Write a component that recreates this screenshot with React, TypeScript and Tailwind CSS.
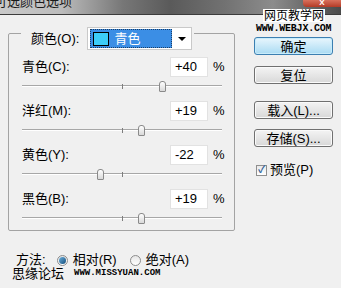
import type { ReactNode } from 'react';

interface ChannelRow {
  label: string;
  value: number;
}

const rows: ChannelRow[] = [
  { label: '青色(C):', value: 40 },
  { label: '洋红(M):', value: 19 },
  { label: '黄色(Y):', value: -22 },
  { label: '黑色(B):', value: 19 },
];

const formatValue = (value: number) => (value > 0 ? `+${value}` : `${value}`);

function Slider({ value }: { value: number }) {
  return (
    <div className="relative h-[18px]">
      <div className="absolute left-0 right-0 top-[8px] h-px bg-[#a7a7a7]" />
      <div className="absolute left-0 right-0 top-[9px] h-px bg-white" />
      <div className="absolute left-[100px] top-[7px] h-[5px] w-px bg-[#7d7d7d]" />
      <div
        className="absolute top-[4px] h-[11px] w-[7px] rounded-t-[3px] rounded-b-[1px] border border-[#8a8a8a] bg-gradient-to-b from-white to-[#d9d9d9]"
        style={{ left: 100 + value - 3 }}
      />
    </div>
  );
}

function Button({ children, primary }: { children: ReactNode; primary?: boolean }) {
  return (
    <div
      className={
        primary
          ? 'flex h-[18px] w-[79px] items-center justify-center rounded-[3px] border border-[#3c7fb1] bg-gradient-to-b from-[#e8f6fd] to-[#a9dbf3] shadow-[inset_0_0_0_1px_#c8ecfb] text-[13px] leading-none text-black'
          : 'flex h-[18px] w-[79px] items-center justify-center rounded-[3px] border border-[#707070] bg-gradient-to-b from-[#f4f4f4] to-[#d8d8d8] shadow-[inset_0_0_0_1px_#fafafa] text-[13px] leading-none text-black'
      }
    >
      {children}
    </div>
  );
}

function Radio({ checked }: { checked?: boolean }) {
  return (
    <span className="flex h-[11px] w-[11px] items-center justify-center rounded-full border border-[#8c8c8c] bg-gradient-to-b from-[#e6e6e6] to-white">
      {checked && <span className="h-[7px] w-[7px] rounded-full bg-gradient-to-br from-[#6fb3e0] to-[#0f4d7a]" />}
    </span>
  );
}

export default function App() {
  return (
    <div
      className="relative h-[288px] w-[341px] overflow-hidden bg-[#f0f0f0] text-[13px] text-black"
      style={{ fontFamily: '"Liberation Sans", "Noto Sans CJK SC", sans-serif' }}
    >
      {/* title bar */}
      <div className="relative h-[15px] overflow-hidden border-b border-[#3c3c3c] bg-[linear-gradient(90deg,#c9c9c9_0%,#bcbcbc_18%,#777_36%,#5a5a5a_50%,#727272_66%,#8c8c8c_80%,#6a6a6a_90%,#4a4a4a_100%)]">
        <div className="-ml-[6px] -mt-[6px] whitespace-nowrap text-[13px] leading-[16px] text-[#1a1a1a]">可选颜色选项</div>
        <div className="absolute right-0 top-0 flex h-[7px] w-[38px] items-end justify-center rounded-bl-[4px] bg-gradient-to-b from-[#d8705c] to-[#b33a26] text-[8px] font-bold leading-none text-white">
          X
        </div>
      </div>

      <div className="flex">
        {/* channel group */}
        <fieldset className="ml-[8px] mt-px w-[227px] rounded-[2px] border border-[#a3a3a3] pb-[3px] pl-[13px] pr-[12px]">
          <legend className="-ml-px flex items-center pl-[10px] pr-[2px] pt-[11px]">
            <span className="leading-[16px]">颜色(O):</span>
            <div className="ml-[8px] flex h-[23px] w-[105px] items-center border border-[#c9c9c9] bg-white pl-[2px]">
              <div className="flex h-[19px] w-[82px] items-center border border-dotted border-[#1c3f66] bg-[#3b8ee5]">
                <span className="ml-[2px] h-[14px] w-[16px] border border-black bg-[#3ccdf8]" />
                <span className="ml-[5px] leading-[16px] text-white">青色</span>
              </div>
              <span className="ml-[6px] h-0 w-0 border-x-[4px] border-t-[4px] border-x-transparent border-t-black" />
            </div>
          </legend>

          <div className="mt-[7px] flex flex-col gap-[6px]">
            {rows.map((row) => (
              <div key={row.label}>
                <div className="flex h-[20px] items-center justify-between">
                  <span className="leading-[16px]">{row.label}</span>
                  <div className="flex items-center">
                    <div className="flex h-[20px] w-[38px] items-center border border-[#e2e2e2] bg-white pl-[4px] leading-[16px]">
                      {formatValue(row.value)}
                    </div>
                    <span className="ml-[5px] w-[9px] leading-[16px]">%</span>
                  </div>
                </div>
                <Slider value={row.value} />
              </div>
            ))}
          </div>
        </fieldset>

        {/* buttons */}
        <div className="ml-[19px] flex flex-col pt-[22px]">
          <Button primary>确定</Button>
          <div className="mt-[11px]">
            <Button>复位</Button>
          </div>
          <div className="mt-[17px]">
            <Button>载入(L)...</Button>
          </div>
          <div className="mt-[10px]">
            <Button>存储(S)...</Button>
          </div>
          <div className="mt-[15px] flex items-center">
            <span className="ml-[2px] flex h-[11px] w-[11px] items-center justify-center border border-[#8f8f8f] bg-gradient-to-b from-[#e9e9e9] to-white text-[10px] font-bold leading-none text-[#2d5f9a]">
              ✓
            </span>
            <span className="ml-[3px] leading-[16px]">预览(P)</span>
          </div>
        </div>
      </div>

      {/* method */}
      <div className="ml-[16px] mt-[21px] flex items-center">
        <span className="leading-[16px]">方法:</span>
        <span className="ml-[11px]">
          <Radio checked />
        </span>
        <span className="ml-[5px] leading-[16px]">相对(R)</span>
        <span className="ml-[13px]">
          <Radio />
        </span>
        <span className="ml-[5px] leading-[16px]">绝对(A)</span>
      </div>

      {/* watermarks */}
      <div className="absolute left-[263px] top-[9px] flex h-[13px] w-[62px] items-center justify-center whitespace-nowrap bg-white text-[12px] leading-none">
        网页教学网
      </div>
      <div
        className="absolute left-[256px] top-[24px] whitespace-nowrap text-[10px] font-bold leading-none tracking-[-0.2px] text-black"
        style={{ fontFamily: '"Liberation Mono", monospace' }}
      >
        WWW.WEBJX.COM
      </div>
      <div className="absolute left-[12px] top-[267px] flex items-center whitespace-nowrap">
        <span className="text-[13px] leading-none">思缘论坛</span>
        <span
          className="ml-[10px] text-[9px] font-bold leading-none"
          style={{ fontFamily: '"Liberation Mono", monospace' }}
        >
          WWW.MISSYUAN.COM
        </span>
      </div>
    </div>
  );
}
